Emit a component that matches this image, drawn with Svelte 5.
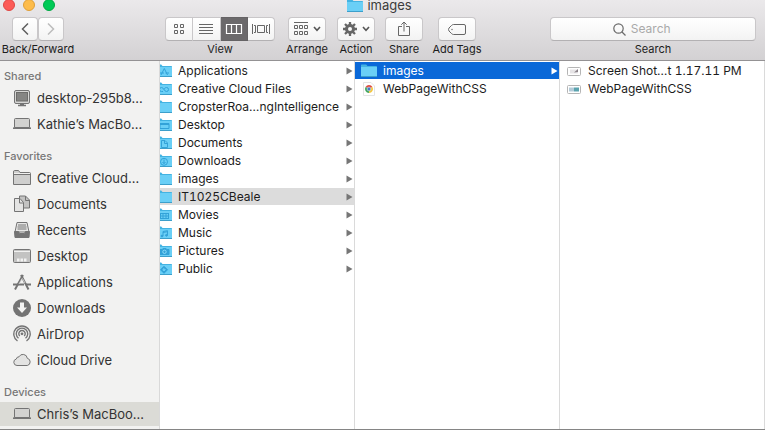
<script>
  const sections = [
    { title: 'Shared', items: [
      { icon: 'display', name: 'desktop-295b8…' },
      { icon: 'laptop', name: 'Kathie’s MacBo…' }
    ] },
    { title: 'Favorites', items: [
      { icon: 'folder', name: 'Creative Cloud…' },
      { icon: 'documents', name: 'Documents' },
      { icon: 'recents', name: 'Recents' },
      { icon: 'desktop', name: 'Desktop' },
      { icon: 'apps', name: 'Applications' },
      { icon: 'downloads', name: 'Downloads' },
      { icon: 'airdrop', name: 'AirDrop' },
      { icon: 'cloud', name: 'iCloud Drive' }
    ] },
    { title: 'Devices', items: [
      { icon: 'laptop', name: 'Chris’s MacBoo…', current: true }
    ] }
  ];

  const folders = [
    { name: 'Applications', glyph: 'apps' },
    { name: 'Creative Cloud Files', glyph: 'cc' },
    { name: 'CropsterRoa…ngIntelligence' },
    { name: 'Desktop', glyph: 'desktop' },
    { name: 'Documents', glyph: 'doc' },
    { name: 'Downloads', glyph: 'down' },
    { name: 'images' },
    { name: 'IT1025CBeale', selected: true },
    { name: 'Movies', glyph: 'film' },
    { name: 'Music', glyph: 'note' },
    { name: 'Pictures', glyph: 'camera' },
    { name: 'Public', glyph: 'public' }
  ];

  const views = ['Icons', 'List', 'Columns', 'Cover Flow'];
  let view = $state('Columns');
  let query = $state('');
</script>

{#snippet folder(glyph)}
  <svg class="folder" viewBox="0 0 16 13" width="16" height="13" aria-hidden="true">
    <path d="M0 1.2Q0 0.5.7.5H5.2L6.5 2H15.3Q16 2 16 2.7V13H0Z" fill="#43b3e2" />
    <path d="M0 3H16V12H0Z" fill="#6acff6" />
    <path d="M0 12.5H16" stroke="#3c9fcb" />
    <g fill="none" stroke="#32a2d8" stroke-width="1">
      {#if glyph === 'apps'}
        <path d="M5 11 8.3 4.5 11.500 11M4 9H8M9.500 9H13" />
      {:else if glyph === 'cc'}
        <path d="M7 9.500H5.500A2 2 0 0 1 5.500 5.500C8 5.500 8 9.500 10.500 9.500A2 2 0 0 0 10.500 5.500C9 5.500 8.500 6.500 8 7.500" />
      {:else if glyph === 'desktop'}
        <path d="M4 5.500H13V10.500H4Z" /><path d="M4 6H13" stroke-width="2" />
      {:else if glyph === 'doc'}
        <path d="M5.500 4.500H9L11.500 7V11.500H5.500ZM8.500 4.500V7.500H11.500" />
      {:else if glyph === 'down'}
        <circle cx="8" cy="7.800" r="3.500" /><path d="M8 5.500V9.500M6.500 8 8 9.700 9.500 8" />
      {:else if glyph === 'film'}
        <path d="M4.500 5V11M7 5V11M10 5V11M12.500 5V11M4 5.500H13M4 8H13M4 10.500H13" />
      {:else if glyph === 'note'}
        <path d="M7 10V5.500L11.500 4.700V9.200M7 6.500 11.500 5.700" /><circle cx="6" cy="10" r=".9" fill="#32a2d8" /><circle cx="10.500" cy="9.300" r=".9" fill="#32a2d8" />
      {:else if glyph === 'camera'}
        <path d="M4 5.500H6L7 4.500H10L11 5.500H13V10.500H4Z" fill="#32a2d8" /><circle cx="8.500" cy="7.800" r="1.700" stroke="#8bdcfa" />
      {:else if glyph === 'public'}
        <path d="M8 4.300 11.500 7.800 8 11.300 4.500 7.800Z" fill="#32a2d8" /><path d="M8 6.500 9.300 7.800 8 9 6.700 7.800Z" stroke="#6acff6" fill="#6acff6" />
      {/if}
    </g>
  </svg>
{/snippet}

{#snippet sideIcon(name)}
  <svg viewBox="0 0 18 18" width="18" height="18" fill="none" stroke="#747474" aria-hidden="true">
    {#if name === 'display'}
      <rect x="1.500" y="1.500" width="15" height="13" rx="1.500" fill="#d6d6d4" />
      <rect x="3.500" y="3.500" width="11" height="8.500" fill="#858583" stroke="#6c6c6a" />
      <path d="M5 16.500H13M7 15.500H11" stroke-width="1.500" />
    {:else if name === 'laptop'}
      <path d="M1.500 12.500V4.500Q1.500 3.500 2.500 3.500H15.500Q16.500 3.500 16.500 4.500V12.500Z" fill="#d2d2d0" />
      <path d="M0 13.200H18" stroke-width="1.600" />
    {:else if name === 'folder'}
      <path d="M.5 15.500V3Q.5 1.500 1.500 1.500H5.500L7 3.500H16.500Q17.500 3.500 17.500 4.500V15.500Z" fill="#cfcfce" />
      <path d="M.5 5.500H17.500" /><path d="M1 4.500H17" stroke="#f0f0ef" />
    {:else if name === 'documents'}
      <path d="M6.500 1H12.500L16.500 5V13H6.500Z" fill="#c3c3c2" /><path d="M12.500 1V5.500H16.500" />
      <path d="M1.500 3.500H7L10.500 7.500V16.500H1.500Z" fill="#e4e4e3" /><path d="M6.500 3.500V8H10.500" />
    {:else if name === 'recents'}
      <path d="M4 1.500H14L16 11H2Z" fill="#e7e7e6" />
      <path d="M5 4H13M4.500 6H13.500M4.500 8H13.500" />
      <path d="M1.500 10.500H5.500L6.500 12.500H11.500L12.500 10.500H16.500L16 16.500H2Z" fill="#747474" />
    {:else if name === 'desktop'}
      <rect x=".5" y="2.500" width="17" height="13" rx="1" fill="#c3c3c2" />
      <path d="M1 4.500H17" stroke="#f2f2f1" />
      <path d="M4 13H14" stroke="#f2f2f1" stroke-width="3" stroke-dasharray="2.500 1" />
    {:else if name === 'apps'}
      <path d="M8 2 15.500 16.500M10 2 2 16.500" stroke-width="2" />
      <path d="M0 11.500H11M13 11.500H18" stroke-width="2" />
      <path d="M9 5.500 6 11M9.500 5.500 12 10" stroke="#ededec" stroke-width=".7" />
    {:else if name === 'downloads'}
      <circle cx="9" cy="9" r="9" fill="#747474" stroke="none" />
      <path d="M7 3.500H11V8.500H14L9 14 4 8.500H7Z" fill="#f3f3f2" stroke="none" />
    {:else if name === 'airdrop'}
      <path d="M4.500 16A8.200 8.200 0 1 1 13.500 16M5.500 13.300A5.700 5.700 0 1 1 12.500 13.300M6.800 11A3.200 3.200 0 1 1 11.200 11" stroke-width="1.400" />
      <path d="M9 8.200V9L6 16.500H12L9 9" fill="#f2f2f1" stroke="none" />
      <circle cx="9" cy="8.800" r="1.400" fill="#747474" stroke="none" />
    {:else if name === 'cloud'}
      <path d="M4 14.500A3.300 3.300 0 0 1 3.300 8 2.700 2.700 0 0 1 6 5.800 4.400 4.400 0 0 1 14.300 7.300 3.700 3.700 0 0 1 14.300 14.500Z" fill="#e3e3e2" />
    {/if}
  </svg>
{/snippet}

{#snippet arrow()}
  <svg class="arrow" viewBox="0 0 7 8" width="7" height="8" aria-hidden="true"><path d="M.5.500 6.500 4 .5 7.500Z" fill="currentColor" /></svg>
{/snippet}

{#snippet chevron()}
  <svg viewBox="0 0 8 6" width="8" height="6" fill="none" stroke="#555" stroke-width="1.600" aria-hidden="true"><path d="M1 1 4 4.300 7 1" /></svg>
{/snippet}

<div class="window">
  <header>
    <div class="titlebar">
      <div class="lights">
        <button class="light close" aria-label="Close"></button>
        <button class="light minimize" aria-label="Minimize"></button>
        <button class="light zoom" aria-label="Zoom"></button>
      </div>
      <h1>{@render folder()}images</h1>
    </div>

    <div class="toolbar">
      <div class="tool nav">
        <div class="buttons split">
          <button aria-label="Back"><svg viewBox="0 0 8 14" width="8" height="14" fill="none" stroke="#5e5e5e" stroke-width="1.500"><path d="M7 1.500 1.500 7 7 12.500" /></svg></button>
          <button aria-label="Forward"><svg viewBox="0 0 8 14" width="8" height="14" fill="none" stroke="#bcbcbc" stroke-width="1.500"><path d="M1 1.500 6.500 7 1 12.500" /></svg></button>
        </div>
        <span>Back/Forward</span>
      </div>

      <div class="tool view">
        <div class="buttons segmented">
          {#each views as v}
            <button aria-label={v} aria-pressed={view === v} class:active={view === v} onclick={() => (view = v)}>
              <svg viewBox="0 0 20 12" width="20" height="12" fill="none" stroke="currentColor">
                {#if v === 'Icons'}
                  <path d="M5.500 1.500H8.500V4.500H5.500ZM11.500 1.500H14.500V4.500H11.500ZM5.500 7.500H8.500V10.500H5.500ZM11.500 7.500H14.500V10.500H11.500Z" />
                {:else if v === 'List'}
                  <path d="M3 1.500H17M3 4.500H17M3 7.500H17M3 10.500H17" />
                {:else if v === 'Columns'}
                  <path d="M2.500 1.500H17.500V10.500H2.500ZM7.500 1.500V10.500M12.500 1.500V10.500" stroke-width="1.200" />
                {:else}
                  <path d="M6.500 2.500H13.500V9.500H6.500ZM1.500 1V11M3 2.500H4.500V9.500H3M18.500 1V11M17 2.500H15.500V9.500H17" />
                {/if}
              </svg>
            </button>
          {/each}
        </div>
        <span>View</span>
      </div>

      <div class="tool arrange">
        <div class="buttons">
          <button aria-label="Arrange">
            <svg viewBox="0 0 14 14" width="14" height="14" fill="none" stroke="#666"><path d="M0 .5H14M.5 3.500H3.500V6.500H.5ZM5.500 3.500H8.500V6.500H5.500ZM10.500 3.500H13.500V6.500H10.500ZM.5 9.500H3.500V12.500H.5ZM5.500 9.500H8.500V12.500H5.500ZM10.500 9.500H13.500V12.500H10.500Z" /></svg>
            {@render chevron()}
          </button>
        </div>
        <span>Arrange</span>
      </div>

      <div class="tool action">
        <div class="buttons">
          <button aria-label="Action">
            <svg viewBox="0 0 14 14" width="14" height="14" fill="none" stroke="#666"><circle cx="7" cy="7" r="3.500" stroke-width="3" /><path d="M7 0V3M7 11V14M0 7H3M11 7H14M2 2 4.200 4.200M9.800 9.800 12 12M2 12 4.200 9.800M9.800 4.200 12 2" stroke-width="2.300" /></svg>
            {@render chevron()}
          </button>
        </div>
        <span>Action</span>
      </div>

      <div class="tool share">
        <div class="buttons">
          <button aria-label="Share">
            <svg viewBox="0 0 12 16" width="12" height="16" fill="none" stroke="#666"><path d="M4 5.500H.5V14.500H11.500V5.500H8M6 10.500V1M3.300 3.700 6 1 8.700 3.700" /></svg>
          </button>
        </div>
        <span>Share</span>
      </div>

      <div class="tool tags">
        <div class="buttons">
          <button aria-label="Add Tags">
            <svg viewBox="0 0 18 11" width="18" height="11" fill="none" stroke="#666"><path d="M5.500.500H16Q17.500.500 17.500 2V9Q17.500 10.500 16 10.500H5.500Q4.500 10.500 3.500 9.500L1 7Q0 5.500 1 4L3.500 1.500Q4.500.500 5.500.500Z" /><circle cx="4" cy="5.500" r=".7" fill="#666" stroke="none" /></svg>
          </button>
        </div>
        <span>Add Tags</span>
      </div>

      <div class="tool search">
        <div class="field">
          <svg viewBox="0 0 13 13" width="13" height="13" fill="none" stroke="#6a6a6a" stroke-width="1.200" aria-hidden="true"><circle cx="5.500" cy="5.500" r="4.700" /><path d="M9 9 12.500 12.500" /></svg>
          <input id="search" type="text" placeholder="Search" bind:value={query} />
        </div>
        <label for="search">Search</label>
      </div>
    </div>
  </header>

  <main>
    <nav class="sidebar">
      {#each sections as section}
        <section>
          <h2>{section.title}</h2>
          {#each section.items as item}
            <a href="#top" class:current={item.current}>{@render sideIcon(item.icon)}<span>{item.name}</span></a>
          {/each}
        </section>
      {/each}
    </nav>

    <div class="column home">
      {#each folders as item}
        <a href="#top" class:selected={item.selected}>{@render folder(item.glyph)}<span>{item.name}</span>{@render arrow()}</a>
      {/each}
    </div>

    <div class="column">
      <a href="#top" class="focused">{@render folder()}<span>images</span>{@render arrow()}</a>
      <a href="#top">
        <svg viewBox="0 0 16 14" width="16" height="14" aria-hidden="true">
          <path d="M2.500.500H10L13.500 4V13.500H2.500Z" fill="#fff" stroke="#e4e4e4" />
          <path d="M8 7 4.540 5A4 4 0 0 1 11.460 5Z" fill="#dc4a3d" />
          <path d="M8 7V11A4 4 0 0 1 4.540 5Z" fill="#3fa45b" />
          <path d="M8 7 11.460 5A4 4 0 0 1 8 11Z" fill="#f3c63c" />
          <circle cx="8" cy="7" r="1.900" fill="#4778c8" stroke="#fff" stroke-width=".5" />
        </svg>
        <span>WebPageWithCSS</span>
      </a>
    </div>

    <div class="column">
      <a href="#top">
        <svg viewBox="0 0 16 14" width="16" height="14" aria-hidden="true"><rect x="1.500" y="3.500" width="13" height="8" rx="1" fill="#fff" stroke="#b5b5b5" /><path d="M4 5.500H12V9.500H4Z" fill="#e6e4e6" /><path d="M8 8.500 12 5V8Z" fill="#8b8289" /></svg>
        <span>Screen Shot…t 1.17.11 PM</span>
      </a>
      <a href="#top">
        <svg viewBox="0 0 16 14" width="16" height="14" aria-hidden="true"><rect x="1.500" y="3.500" width="13" height="8" rx="1" fill="#fff" stroke="#b5b5b5" /><path d="M3 5.500H8V9.500H3Z" fill="#b4cbd8" /><path d="M8 5.500H13V9.500H8Z" fill="#5ba3ae" /></svg>
        <span>WebPageWithCSS</span>
      </a>
    </div>
  </main>
</div>

<style>
  :global(body) { margin: 0; overflow: hidden; background: #fff; }
  .window {
    display: flex;
    flex-direction: column;
    box-sizing: border-box;
    height: 100vh;
    border-bottom: 1px solid #858585;
    font-family: Inter, "Liberation Sans", sans-serif;
    font-size: 12px;
    color: #1c1c1c;
  }
  header {
    background: linear-gradient(#ebe9eb, #d3d1d3);
    border-bottom: 1px solid #949294;
  }
  .titlebar {
    display: grid;
    grid-template-columns: 1fr auto 1fr;
    align-items: center;
    align-content: center;
    height: 10px;
    padding: 0 9px 0 3px;
  }
  .lights { display: flex; gap: 8px; }
  .light { width: 12px; height: 12px; border: 1px solid; border-radius: 50%; padding: 0; }
  .close { background: #fc5b57; border-color: #df4744; }
  .minimize { background: #fdbc4b; border-color: #df9f39; }
  .zoom { background: #00ca56; border-color: #00a844; }
  h1 {
    display: flex;
    align-items: center;
    gap: 4px;
    height: 10px;
    margin: 0;
    font-size: 13px;
    line-height: 10px;
    font-weight: 400;
    color: #3c3c3c;
  }
  .toolbar { display: flex; padding: 7px 9px 3px 0; }
  .tool {
    display: flex;
    flex-direction: column;
    align-items: center;
    flex: none;
    font-size: 11px;
    line-height: 16px;
    white-space: nowrap;
  }
  .nav { width: 76px; }
  .view { width: 110px; margin-left: 89px; }
  .arrange { width: 42px; margin-left: 11px; }
  .action { width: 42px; margin-left: 7px; }
  .share { width: 40px; margin-left: 7px; }
  .tags { width: 50px; margin-left: 8px; }
  .search { flex: 1; min-width: 0; margin-left: 68px; }
  .buttons { display: flex; width: 38px; height: 24px; }
  .split { width: 52px; }
  .segmented { width: 100%; }
  .buttons button {
    display: flex;
    flex: 1;
    align-items: center;
    justify-content: center;
    gap: 5px;
    min-width: 0;
    padding: 0;
    color: #666;
    background: linear-gradient(#fff, #f3f3f3);
    border: 1px solid #c9c7c9;
    border-bottom-color: #b3b1b3;
    border-radius: 4px;
  }
  .segmented button { border-radius: 0; border-left-width: 0; }
  .segmented button:first-child { border-left-width: 1px; border-radius: 4px 0 0 4px; }
  .segmented button:last-child { border-radius: 0 4px 4px 0; }
  .segmented button.active { background: #6b696b; border-color: #656365; color: #fff; }
  .field {
    display: flex;
    align-items: center;
    gap: 5px;
    box-sizing: border-box;
    width: 100%;
    height: 24px;
    padding-left: 30%;
    background: linear-gradient(#fff, #f3f3f3);
    border: 1px solid #c9c7c9;
    border-bottom-color: #b3b1b3;
    border-radius: 4px;
  }
  .field svg { flex: none; }
  input { flex: 1; min-width: 0; padding: 0; border: 0; outline: 0; background: none; font: 12px/18px Inter, "Liberation Sans", sans-serif; }
  input::placeholder { color: #a9a9a9; opacity: 1; }

  main { display: flex; flex: 1; min-height: 0; }
  .sidebar {
    flex: none;
    box-sizing: border-box;
    width: 160px;
    padding-top: 6px;
    background: #f2f2f1;
    border-right: 1px solid #d9d9d9;
    overflow: hidden;
  }
  section { margin-bottom: 10px; }
  h2 { margin: 0; padding-left: 4px; font-size: 11px; line-height: 18px; font-weight: 500; color: #777; }
  a { display: flex; align-items: center; color: inherit; text-decoration: none; white-space: nowrap; }
  a svg { flex: none; }
  .sidebar a {
    gap: 6px;
    height: 24px;
    padding-left: 13px;
    border: solid transparent;
    border-width: 1px 0;
    background-clip: padding-box;
    font-size: 13px;
    color: #333;
  }
  .sidebar .current { background-color: #dbdbd6; }
  .column {
    flex: 205 1 0;
    min-width: 0;
    box-sizing: border-box;
    padding-top: 1px;
    border-right: 1px solid #dadada;
    overflow: hidden;
    font-variant-numeric: tabular-nums;
  }
  .home { flex-grow: 195; }
  .column a { gap: 6px; height: 17px; margin-bottom: 1px; padding: 0 1px 0 6px; line-height: 17px; }
  .home a { padding-left: 0; }
  .home .folder { margin-left: -4px; }
  .arrow { margin-left: auto; color: #767676; }
  .selected { background: #dcdcdc; }
  .focused { background: #0a68d8; color: #fff; }
  .focused .arrow { color: #fff; }
</style>
